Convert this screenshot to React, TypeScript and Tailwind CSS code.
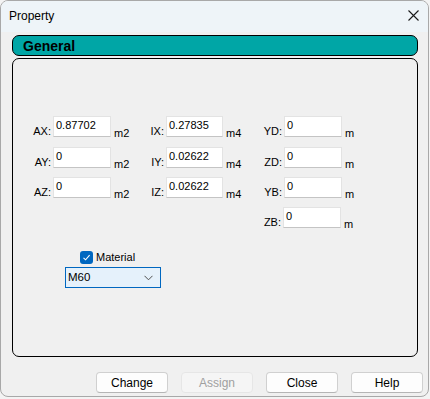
import React from "react";

const font = { fontFamily: '"Liberation Sans", Arial, sans-serif' };

function Field({ label, value, unit, lw, iw, uw }: { label: string; value: string; unit: string; lw: string; iw: string; uw: string }) {
  return (
    <div className="flex items-start shrink-0">
      <div className={`${lw} text-right pt-[9px] leading-[13px]`}>{label}</div>
      <div className={`${iw} ml-[2px] h-[21px] bg-white border border-[#e3e3e3] border-b-[#c4c4c4] pl-[2px] pt-[2px] leading-[13px]`}>{value}</div>
      <div className={`${uw} pl-[3px] pt-[11px] leading-[13px]`}>{unit}</div>
    </div>
  );
}

function Btn({ children, disabled }: { children: React.ReactNode; disabled?: boolean }) {
  return (
    <div
      className={`w-[72px] shrink-0 h-[21px] rounded-[4px] border flex items-center justify-center text-[12px] ${
        disabled ? "bg-[#f5f5f5] border-[#e6e6e6] text-[#a0a0a0]" : "bg-[#fdfdfd] border-[#d0d0d0] border-b-[#b5b5b5] text-black"
      }`}
    >
      {children}
    </div>
  );
}

export default function App() {
  return (
    <div className="w-[430px] h-[399px] bg-[#f3f3f3] text-black text-[11px]" style={font}>
      <div className="w-[429px] h-[397px] bg-[#f0f0f0] border border-[#a8a8a8] rounded-[8px] overflow-hidden flex flex-col">
        {/* Title bar */}
        <div className="h-[31px] bg-[#eef4f8] flex items-center justify-between shrink-0">
          <span className="pl-[8px] text-[12px] pb-[1px]">Property</span>
          <svg width="11" height="11" viewBox="0 0 11 11" className="mr-[9px] mb-[2px]">
            <path d="M0.5 0.5 L10.5 10.5 M10.5 0.5 L0.5 10.5" stroke="#1a1a1a" strokeWidth="1.1" />
          </svg>
        </div>
        {/* Body */}
        <div className="flex flex-col pl-[11px] pt-[3px]">
          <div className="h-[21px] w-[406px] bg-[#00a6a6] border border-black rounded-[7px] flex items-center pl-[10px]">
            <span className="font-bold text-[14px] leading-none">General</span>
          </div>
          <div className="mt-[2px] h-[299px] w-[406px] border border-black rounded-[7px] pt-[57px] pl-[11px] flex flex-col">
            <div className="flex flex-col">
              <div className="flex h-[31px]">
                <Field label="AX:" value="0.87702" unit="m2" lw="w-[27px]" iw="w-[58px]" uw="w-[35px]" />
                <Field label="IX:" value="0.27835" unit="m4" lw="w-[18px]" iw="w-[57px]" uw="w-[34px]" />
                <Field label="YD:" value="0" unit="m" lw="w-[25px]" iw="w-[58px]" uw="w-[20px]" />
              </div>
              <div className="flex h-[30px]">
                <Field label="AY:" value="0" unit="m2" lw="w-[27px]" iw="w-[58px]" uw="w-[35px]" />
                <Field label="IY:" value="0.02622" unit="m4" lw="w-[18px]" iw="w-[57px]" uw="w-[34px]" />
                <Field label="ZD:" value="0" unit="m" lw="w-[25px]" iw="w-[58px]" uw="w-[20px]" />
              </div>
              <div className="flex h-[30px]">
                <Field label="AZ:" value="0" unit="m2" lw="w-[27px]" iw="w-[58px]" uw="w-[35px]" />
                <Field label="IZ:" value="0.02622" unit="m4" lw="w-[18px]" iw="w-[57px]" uw="w-[34px]" />
                <Field label="YB:" value="0" unit="m" lw="w-[25px]" iw="w-[58px]" uw="w-[20px]" />
              </div>
              <div className="flex h-[30px]">
                <div className="w-[232px] shrink-0" />
                <Field label="ZB:" value="0" unit="m" lw="w-[25px]" iw="w-[58px]" uw="w-[20px]" />
              </div>
            </div>
            <div className="mt-[14px] ml-[56px] flex items-center h-[13px]">
              <div className="w-[13px] h-[13px] rounded-[3px] bg-[#0067c0] flex items-center justify-center">
                <svg width="9" height="9" viewBox="0 0 9 9">
                  <path d="M1.5 4.8 L3.6 6.8 L7.6 2.2" stroke="white" strokeWidth="1.1" fill="none" />
                </svg>
              </div>
              <span className="ml-[3px] text-[11px] leading-[13px]">Material</span>
            </div>
            <div className="mt-[3px] ml-[41px] w-[96px] h-[21px] bg-[#e5f1fb] border border-[#0067c0] flex items-center justify-between pl-[2px] pr-[7px]">
              <span className="text-[11.5px]">M60</span>
              <svg width="9" height="6" viewBox="0 0 9 6">
                <path d="M0.5 0.8 L4.5 4.8 L8.5 0.8" stroke="#505050" strokeWidth="1" fill="none" />
              </svg>
            </div>
          </div>
          <div className="mt-[15px] flex justify-start gap-[13px] pl-[84px]">
            <Btn>Change</Btn>
            <Btn disabled>Assign</Btn>
            <Btn>Close</Btn>
            <Btn>Help</Btn>
          </div>
        </div>
      </div>
    </div>
  );
}
